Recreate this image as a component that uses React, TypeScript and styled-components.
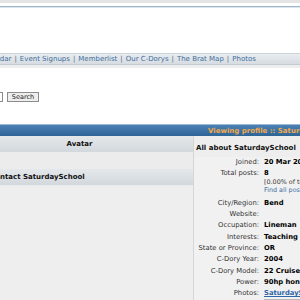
import React from 'react'
import styled, { createGlobalStyle } from 'styled-components'

const GlobalStyle = createGlobalStyle`
  body {
    margin: 0;
    background: #ffffff;
    font-family: "DejaVu Sans", Verdana, sans-serif;
  }
`

const Page = styled.div`
  width: 300px;
  height: 300px;
  overflow: hidden;
  background: #ffffff;
`

const TopBand = styled.div`
  height: 3px;
  background: #e4e4e4;
`

const BlueRule = styled.div`
  margin-top: 3px;
  height: 1px;
  border-bottom: 1px solid #dde6ee;
  background: #9fb6ca;
`

const Masthead = styled.div`
  height: 45px;
`

const NavBar = styled.div`
  height: 10px;
  display: flex;
  align-items: center;
  white-space: nowrap;
  background: linear-gradient(#e9edf0, #d6dce1);
  border-top: 1px solid #cdd4da;
  border-bottom: 1px solid #c3cbd2;
  font-size: 7px;
  color: #5a6b7a;
`

const NavList = styled.div`
  margin-left: -20px;
  display: flex;
  gap: 3px;
`

const NavLink = styled.a`
  color: #3f6e9c;
  text-decoration: none;
`

const NavStrip = styled.div`
  height: 3px;
  background: #eeeeee;
`

const SearchRow = styled.form`
  margin-top: 24px;
  height: 32px;
  display: flex;
  align-items: flex-start;
  gap: 4px;
`

const SearchInput = styled.input`
  box-sizing: border-box;
  width: 60px;
  height: 10px;
  margin: 0 0 0 -57px;
  border: 1px solid #8a8a8a;
  background: #ffffff;
  padding: 0;
`

const SearchButton = styled.button`
  box-sizing: border-box;
  height: 10px;
  width: 32px;
  margin: 0;
  padding: 0;
  font-family: "DejaVu Sans", Verdana, sans-serif;
  font-size: 6.5px;
  line-height: 8px;
  color: #222;
  background: #eeeeee;
  border: 1px solid #8d8d8d;
`

const ProfileTable = styled.div`
  display: grid;
  grid-template-columns: 194px 1fr;
  background: #f0f0f0;
`

const TitleBar = styled.div`
  grid-column: 1 / span 2;
  height: 11px;
  display: flex;
  align-items: center;
  padding-left: 208px;
  white-space: nowrap;
  background: linear-gradient(#4a80b3, #2e6597);
  border-top: 1px solid #9cbad6;
  color: #f3a84a;
  font-weight: bold;
  font-size: 7px;
`

const LeftCol = styled.div`
  background: #eeeeee;
  border-right: 1px solid #d6d6d6;
`

const CatHead = styled.div<{ $center?: boolean }>`
  height: 16px;
  display: flex;
  align-items: center;
  justify-content: ${(p) => (p.$center ? 'center' : 'flex-start')};
  padding-right: ${(p) => (p.$center ? '34px' : '0')};
  background: linear-gradient(#e4e8eb, #d3d8dd);
  border-bottom: 1px solid #e9ecee;
  font-size: 7px;
  font-weight: bold;
  color: #111;
  white-space: nowrap;
  overflow: hidden;
`

const ClippedText = styled.span`
  margin-left: -10px;
`

const EmptyRow = styled.div`
  height: 16px;
  background: #ececec;
`

const RightCol = styled.div`
  background: #f1f1f1;
  white-space: nowrap;
`

const AboutHead = styled.div`
  height: 21px;
  display: flex;
  align-items: center;
  padding: 2px 0 0 2px;
  box-sizing: border-box;
  font-size: 7px;
  font-weight: bold;
  color: #111;
  background: #eeeeee;
`

const InfoRow = styled.div`
  display: grid;
  grid-template-columns: 65px auto;
  column-gap: 5px;
  align-items: start;
  line-height: 11.3px;
  font-size: 6.8px;
`

const Label = styled.div`
  text-align: right;
  color: #333;
`

const Value = styled.div`
  font-weight: bold;
  color: #000;
`

const PostsValue = styled(Value)`
  line-height: 8.5px;
  padding: 1px 0 3px;
`

const Small = styled.div`
  font-weight: normal;
  font-size: 6.4px;
  color: #333;
`

const SmallLink = styled(Small)`
  color: #3d6fa3;
`

const ValueLink = styled.a`
  color: #2f66a5;
  text-decoration: underline;
`

const ValueBox = styled.span`
  display: inline-block;
  width: 60px;
  height: 8px;
  border: 1px solid #b8b8b8;
  background: #fff;
`

const details: [string, string][] = [
  ['City/Region:', 'Bend'],
  ['Website:', ''],
  ['Occupation:', 'Lineman'],
  ['Interests:', 'Teaching'],
  ['State or Province:', 'OR'],
  ['C-Dory Year:', '2004'],
  ['C-Dory Model:', '22 Cruiser'],
  ['Power:', '90hp honda'],
]

const navItems = ['Calendar', 'Event Signups', 'Memberlist', 'Our C-Dorys', 'The Brat Map', 'Photos']

const App = () => {
  return (
    <Page>
      <GlobalStyle />
      <TopBand />
      <BlueRule />
      <Masthead />
      <NavBar>
        <NavList>
          {navItems.map((item, i) => (
            <React.Fragment key={item}>
              {i > 0 && <span>|</span>}
              <NavLink href="#">{item}</NavLink>
            </React.Fragment>
          ))}
        </NavList>
      </NavBar>
      <NavStrip />
      <SearchRow onSubmit={(e) => e.preventDefault()}>
        <SearchInput type="text" />
        <SearchButton type="submit">Search</SearchButton>
      </SearchRow>
      <ProfileTable>
        <TitleBar>Viewing profile :: SaturdaySchool</TitleBar>
        <LeftCol>
          <CatHead $center>Avatar</CatHead>
          <EmptyRow />
          <CatHead>
            <ClippedText>Contact SaturdaySchool</ClippedText>
          </CatHead>
        </LeftCol>
        <RightCol>
          <AboutHead>All about SaturdaySchool</AboutHead>
          <InfoRow>
            <Label>Joined:</Label>
            <Value>20 Mar 2008</Value>
          </InfoRow>
          <InfoRow>
            <Label>Total posts:</Label>
            <PostsValue>
              8
              <Small>[0.00% of total / 0.00 posts per day]</Small>
              <SmallLink>Find all posts by SaturdaySchool</SmallLink>
            </PostsValue>
          </InfoRow>
          {details.map(([label, value]) => (
            <InfoRow key={label}>
              <Label>{label}</Label>
              <Value>{value}</Value>
            </InfoRow>
          ))}
          <InfoRow>
            <Label>Photos:</Label>
            <Value>
              <ValueLink href="#">SaturdaySchool's photos</ValueLink>
            </Value>
          </InfoRow>
          <InfoRow>
            <Label>Usual haunts:</Label>
            <Value>
              <ValueBox />
            </Value>
          </InfoRow>
        </RightCol>
      </ProfileTable>
    </Page>
  )
}

export default App
